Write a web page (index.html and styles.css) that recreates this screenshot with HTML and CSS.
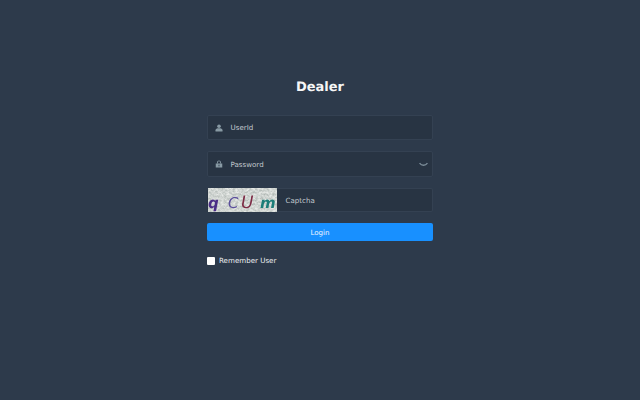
FILE: index.html
```html
<!DOCTYPE html>
<html lang="en">
<head>
<meta charset="utf-8">
<title>Dealer</title>
<link rel="stylesheet" href="styles.css">
</head>
<body>
<form class="login">
  <h1 class="title">Dealer</h1>
  <div class="field">
    <svg class="icon" viewBox="0 0 16 16"><circle cx="8" cy="4.6" r="3.6"/><path d="M1 15v-2.4c0-2.6 2.6-3.9 7-3.9s7 1.3 7 3.9V15z"/></svg>
    <span class="ph">UserId</span>
  </div>
  <div class="field field-tall">
    <svg class="icon" viewBox="0 0 16 16"><path d="M4 7V4.8a4 4 0 0 1 8 0V7h-1.8V4.8a2.2 2.2 0 0 0-4.4 0V7z"/><path fill-rule="evenodd" d="M1.5 7h13v8h-13zM8 9.2a1.2 1.2 0 0 0-.6 2.2v1.4h1.2v-1.4A1.2 1.2 0 0 0 8 9.2z"/></svg>
    <span class="ph">Password</span>
    <svg class="eye" viewBox="0 0 16 8"><path d="M1 1.5c2 2.6 4 3.8 7 3.8s5-1.2 7-3.8" /></svg>
  </div>
  <div class="field captcha-field">
    <svg class="captcha" viewBox="1 0 69 24">
      <defs>
        <filter id="grain" x="0" y="0" width="100%" height="100%">
          <feTurbulence type="fractalNoise" baseFrequency="0.35 0.5" numOctaves="3" seed="7"/>
          <feColorMatrix type="matrix" values="0 0 0 0 0.80  0 0 0 0 0.82  0 0 0 0 0.80  1.6 0 0 0 -0.2"/>
        </filter>
        <filter id="soft"><feGaussianBlur stdDeviation="0.3"/></filter>
      </defs>
      <rect width="70" height="24" fill="#aeb6b2"/>
      <rect width="70" height="24" filter="url(#grain)"/>
      <g filter="url(#soft)">
        <text class="c1" x="1" y="20">q</text>
        <text class="c2" x="21" y="20">C</text>
        <text class="c3" x="34" y="20">U</text>
        <text class="c4" x="53" y="20">m</text>
      </g>
    </svg>
    <span class="ph ph-captcha">Captcha</span>
  </div>
  <button class="submit" type="button">Login</button>
  <label class="remember"><span class="box"></span>Remember User</label>
</form>
</body>
</html>
```
FILE: styles.css
```css
html, body {
  margin: 0;
  height: 100%;
}
body {
  background: #2d3a4b;
  font-family: "DejaVu Sans", sans-serif;
  text-rendering: geometricPrecision;
  height: 400px;
  overflow: hidden;
}
.login {
  width: 226px;
  margin: 0 auto;
  padding-top: 79px;
  display: flex;
  flex-direction: column;
}
.title {
  margin: 0 0 19px;
  font-size: 13px;
  line-height: 17px;
  font-weight: 700;
  color: #f6f6f6;
  text-align: center;
}
.field {
  height: 25px;
  margin-bottom: 11px;
  box-sizing: border-box;
  display: flex;
  align-items: center;
  background: #283443;
  border: 1px solid #344152;
  border-radius: 2px;
  padding-left: 7px;
  padding-right: 4px;
}
.field-tall {
  height: 26px;
}
.icon {
  width: 8px;
  height: 8px;
  fill: #889aa4;
  flex: none;
}
.ph {
  margin-left: 7.5px;
  font-size: 7.1px;
  color: #c2c8ce;
}
.eye {
  margin-left: auto;
  width: 9px;
  height: 5px;
  fill: none;
  stroke: #7d8e9a;
  stroke-width: 2.4;
}
.captcha-field {
  height: 24px;
  padding-left: 1px;
  border-left: 0;
}
.captcha {
  width: 69px;
  height: 24px;
  flex: none;
  margin: -1px 0;
}
.captcha text {
  font-family: "DejaVu Sans", sans-serif;
  font-size: 15px;
  font-style: italic;
  font-weight: 700;
}
.captcha .c1 { fill: #4b2f86; }
.captcha .c2 { fill: #5b4f9c; font-weight: 400; }
.captcha .c3 { fill: #7c2a44; font-weight: 400; font-size: 17px; }
.captcha .c4 { fill: #1c7d78; }
.ph-captcha {
  margin-left: 8.5px;
}
.submit {
  height: 18px;
  margin: 0 0 15px;
  border: 0;
  border-radius: 2px;
  background: #1890ff;
  color: #eef6ff;
  font-family: inherit;
  font-size: 7.1px;
  padding: 0;
}
.remember {
  display: flex;
  align-items: center;
  font-size: 7.1px;
  color: #eceff1;
  line-height: 10px;
}
.box {
  width: 8px;
  height: 8px;
  background: #fff;
  border-radius: 1px;
  margin-right: 4px;
}
```
